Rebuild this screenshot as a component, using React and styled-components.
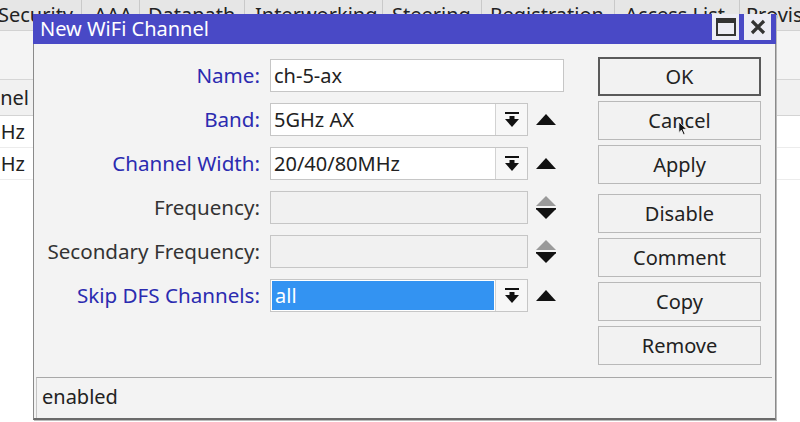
import React from 'react'
import styled, { createGlobalStyle } from 'styled-components'

const Global = createGlobalStyle`
  html, body { margin: 0; padding: 0; }
  body {
    width: 800px;
    height: 422px;
    overflow: hidden;
    background: #ffffff;
    font-family: "Noto Sans", "Open Sans", sans-serif;
  }
`

const Screen = styled.div`
  position: relative;
  width: 800px;
  height: 422px;
  overflow: hidden;
  background: #ffffff;
`

const TabBar = styled.div`
  display: flex;
  height: 30px;
  background: #e6e6e6;
  border-bottom: 1px solid #d2d2d2;
  margin-left: -2px;
`

const Tab = styled.div`
  flex: 0 0 ${p => p.w}px;
  box-sizing: border-box;
  padding-left: ${p => p.pad}px;
  border-right: 1px solid #c9c9c9;
  font-size: 20px;
  line-height: 30px;
  color: #222;
  white-space: nowrap;
  overflow: hidden;
`

const Toolbar = styled.div`
  height: 48px;
  background: #f4f4f4;
  border-bottom: 1px solid #d6d6d6;
`

const Table = styled.div`
  margin-left: -50px;
`

const HeadRow = styled.div`
  height: 35px;
  display: flex;
  align-items: center;
  background: #f1f1f1;
  border-bottom: 1px solid #d4d4d4;
`

const Row = styled.div`
  height: 31px;
  display: flex;
  align-items: center;
  border-bottom: 1px solid #ececec;
`

const Cell = styled.div`
  width: ${p => p.w}px;
  font-size: 20px;
  color: #222;
  text-align: right;
  white-space: nowrap;
`

const Dialog = styled.div`
  position: absolute;
  left: 33px;
  top: 14px;
  width: 743px;
  height: 406px;
  box-sizing: border-box;
  display: flex;
  flex-direction: column;
  background: #f3f3f3;
  border: 1px solid #8a8a8a;
  border-top: none;
  border-bottom: 2px solid #6a6a6a;
  box-shadow: 1px 1px 0 #bbbbbb;
`

const TitleBar = styled.div`
  height: 30px;
  margin: 0 -1px;
  display: flex;
  align-items: center;
  background: #4949c6;
  padding-left: 7px;
  padding-right: 5px;
`

const Title = styled.div`
  flex: 1;
  font-size: 20px;
  color: #ffffff;
  line-height: 30px;
`

const WinButton = styled.div`
  width: 27px;
  height: 26px;
  margin-left: 5px;
  margin-top: -4px;
  display: flex;
  align-items: center;
  justify-content: center;
  background: #ececf4;
`

const Body = styled.div`
  flex: 1;
  display: flex;
  padding-top: 13px;
`

const Form = styled.div`
  display: grid;
  grid-template-columns: 226px 294px;
  grid-auto-rows: 33px;
  column-gap: 10px;
  row-gap: 11px;
  padding-top: 2px;
  align-content: start;
`

const Label = styled.div`
  font-size: 20.6px;
  line-height: 33px;
  text-align: right;
  white-space: nowrap;
  color: ${p => (p.blue ? '#2b2bb0' : '#333333')};
`

const Field = styled.div`
  display: flex;
  align-items: center;
`

const Input = styled.div`
  box-sizing: border-box;
  width: ${p => p.w}px;
  height: 33px;
  display: flex;
  align-items: stretch;
  border: 1px solid #c6c6c6;
  background: ${p => (p.disabled ? '#f1f1f1' : '#ffffff')};
`

const Value = styled.div`
  flex: 1;
  font-size: 20px;
  padding-left: 3px;
  color: ${p => (p.selected ? '#ffffff' : '#222222')};
  background: ${p => (p.selected ? '#3393f2' : 'transparent')};
  margin: ${p => (p.selected ? '1px' : '0')};
  line-height: ${p => (p.selected ? '29px' : '31px')};
`

const DropButton = styled.div`
  width: 31px;
  border-left: 1px solid #d2d2d2;
  display: flex;
  align-items: center;
  justify-content: center;
  background: #f7f7f7;
`

const Side = styled.div`
  width: 36px;
  display: flex;
  align-items: center;
  justify-content: center;
`

const Buttons = styled.div`
  margin-left: 34px;
  width: 163px;
  display: flex;
  flex-direction: column;
  gap: 5px;
`

const Button = styled.div`
  box-sizing: border-box;
  height: 39px;
  margin-top: ${p => (p.gapBefore ? '5px' : '0')};
  display: flex;
  align-items: center;
  justify-content: center;
  font-size: 20px;
  color: #222;
  background: #f2f2f2;
  border: ${p => (p.primary ? '2px solid #5a5a5a' : '1px solid #b9b9b9')};
`

const Status = styled.div`
  height: 40px;
  margin: 0 3px 0 2px;
  border-top: 1px solid #a8a8a8;
  border-left: 1px solid #c4c4c4;
  font-size: 20px;
  line-height: 38px;
  padding-left: 5px;
  color: #222;
`

const Cursor = styled.svg`
  position: absolute;
  left: 678px;
  top: 121px;
`

const DropIcon = () => (
  <svg width="14" height="16" viewBox="0 0 14 16">
    <rect x="0" y="0" width="14" height="2" fill="#111" />
    <rect x="4.5" y="4" width="5" height="4" fill="#111" />
    <polygon points="0,7 14,7 7,15" fill="#111" />
  </svg>
)

const UpIcon = () => (
  <svg width="20" height="11" viewBox="0 0 20 11">
    <polygon points="10,0 20,11 0,11" fill="#111" />
  </svg>
)

const SpinIcon = () => (
  <svg width="20" height="24" viewBox="0 0 20 24">
    <polygon points="10,0 20,10 0,10" fill="#9a9a9a" />
    <rect x="0" y="12" width="20" height="1.5" fill="#111" />
    <polygon points="0,13 20,13 10,23" fill="#111" />
  </svg>
)

const fields = [
  { label: 'Name', blue: true, kind: 'text', value: 'ch-5-ax' },
  { label: 'Band', blue: true, kind: 'select', value: '5GHz AX' },
  { label: 'Channel Width', blue: true, kind: 'select', value: '20/40/80MHz' },
  { label: 'Frequency', kind: 'spin' },
  { label: 'Secondary Frequency', kind: 'spin' },
  { label: 'Skip DFS Channels', blue: true, kind: 'select', value: 'all', selected: true },
]

const tabs = [
  ['Security', 84, 0],
  ['AAA', 58, 12],
  ['Datapath', 105, 8],
  ['Interworking', 138, 10],
  ['Steering', 99, 9],
  ['Registration', 133, 8],
  ['Access List', 125, 10],
  ['Provisioning', 160, 6],
]

const buttons = ['OK', 'Cancel', 'Apply', 'Disable', 'Comment', 'Copy', 'Remove']

const App = () => (
  <Screen>
    <Global />
    <TabBar>
      {tabs.map(([t, w, pad]) => (
        <Tab key={t} w={w} pad={pad}>{t}</Tab>
      ))}
    </TabBar>
    <Toolbar />
    <Table>
      <HeadRow><Cell w={79}>Channel</Cell></HeadRow>
      <Row><Cell w={75}>5GHz</Cell></Row>
      <Row><Cell w={75}>2GHz</Cell></Row>
    </Table>

    <Dialog>
      <TitleBar>
        <Title>New WiFi Channel</Title>
        <WinButton>
          <svg width="20" height="18" viewBox="0 0 20 18">
            <rect x="1" y="1" width="18" height="16" fill="none" stroke="#333" strokeWidth="2" />
            <rect x="1" y="1" width="18" height="4" fill="#333" />
          </svg>
        </WinButton>
        <WinButton>
          <svg width="16" height="16" viewBox="0 0 16 16">
            <path d="M2 2 L14 14 M14 2 L2 14" stroke="#333" strokeWidth="3.2" />
          </svg>
        </WinButton>
      </TitleBar>
      <Body>
        <Form>
          {fields.map(f => (
            <React.Fragment key={f.label}>
              <Label blue={f.blue}>{f.label}:</Label>
              <Field>
                {f.kind === 'text' && (
                  <Input w={294}><Value>{f.value}</Value></Input>
                )}
                {f.kind === 'select' && (
                  <>
                    <Input w={259}>
                      <Value selected={f.selected}>{f.value}</Value>
                      <DropButton><DropIcon /></DropButton>
                    </Input>
                    <Side><UpIcon /></Side>
                  </>
                )}
                {f.kind === 'spin' && (
                  <>
                    <Input w={259} disabled><Value /></Input>
                    <Side><SpinIcon /></Side>
                  </>
                )}
              </Field>
            </React.Fragment>
          ))}
        </Form>
        <Buttons>
          {buttons.map((b, i) => (
            <Button key={b} primary={i === 0} gapBefore={b === 'Disable'}>{b}</Button>
          ))}
        </Buttons>
      </Body>
      <Status>enabled</Status>
    </Dialog>

    <Cursor width="10" height="15" viewBox="0 0 12 18">
      <path d="M1 1 L1 14 L4 11 L6.5 16.5 L8.5 15.5 L6 10 L10.5 10 Z" fill="#111" stroke="#fff" strokeWidth="1" />
    </Cursor>
  </Screen>
)

export default App
